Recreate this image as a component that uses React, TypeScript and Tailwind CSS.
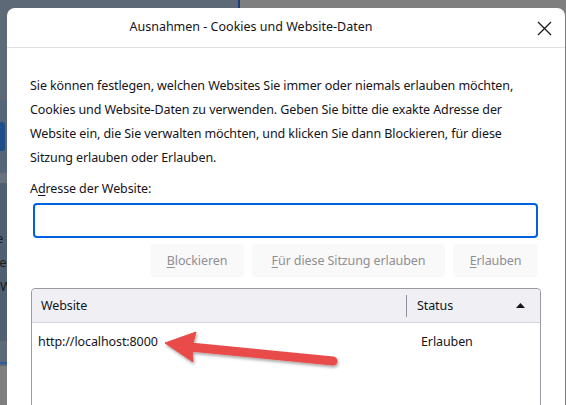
import React from "react";

const font = { fontFamily: '"Segoe UI", "Noto Sans", "Open Sans", sans-serif' };

function U({ children }: { children: React.ReactNode }) {
  return <span className="underline underline-offset-2 decoration-1">{children}</span>;
}

export default function App() {
  return (
    <div
      className="relative w-[566px] h-[405px] overflow-hidden bg-[#7f7f7f]"
      style={font}
    >
      {/* background desktop */}
      <div className="absolute left-0 top-0 w-[238px] h-[366px] bg-[#5d6977]" />
      <div className="absolute left-[238px] top-0 w-[2px] h-[10px] bg-[#1d3f73]" />
      <div className="absolute left-0 top-[100px] w-[8px] h-[73px] bg-[#55667b]" />
      <div className="absolute left-0 top-[122px] w-[5px] h-[29px] rounded-r-[3px] bg-[#1f4d8c]" />
      <div className="absolute left-0 top-[173px] w-[8px] h-[10px] bg-[#68737f]" />
      <div className="absolute left-0 top-[183px] w-[8px] h-[158px] bg-[#4f6073]" />
      <div className="absolute left-0 top-[362px] w-[8px] h-[2px] bg-[#2a5aa0]" />
      <div className="absolute left-0 top-[226px] w-[8px] overflow-hidden text-[13px] leading-[24px] text-[#1b1b1b]">
        <div className="ml-[-4px]">e</div>
        <div className="ml-[-4px]">le</div>
        <div>W</div>
      </div>

      {/* dialog */}
      <div className="absolute left-[7px] top-[8px] w-[558px] h-[420px] bg-white rounded-t-[8px] text-[#15141a]">
        <div className="relative h-[40px] flex items-center justify-center pr-[70px] border-b border-[#e0e0e6]">
          <span className="text-[12.5px]">Ausnahmen - Cookies und Website-Daten</span>
          <svg
            className="absolute left-[530px] top-[13px]"
            width="15"
            height="15"
            viewBox="0 0 15 15"
          >
            <path d="M1 1 L14 14 M14 1 L1 14" stroke="#1a1a1a" strokeWidth="1.3" fill="none" />
          </svg>
        </div>

        <div className="pl-[23px] pr-[24px] pt-[26px] text-[12.5px] tracking-[-0.1px] leading-[24px]">
          <p>
            Sie können festlegen, welchen Websites Sie immer oder niemals erlauben möchten,
            Cookies und Website-Daten zu verwenden. Geben Sie bitte die exakte Adresse der
            Website ein, die Sie verwalten möchten, und klicken Sie dann Blockieren, für diese
            Sitzung erlauben oder Erlauben.
          </p>
          <div className="mt-[7px]">
            A<U>d</U>resse der Website:
          </div>
          <div className="ml-[3px] mt-[2px] w-[505px] h-[35px] rounded-[4px] border-2 border-[#0061e0]" />
          <div className="mt-[6px] flex justify-end gap-[8px] pr-[3px] text-[#8f8f94]">
            <div className="w-[94px] h-[33px] rounded-[4px] bg-[#f9f9fa] flex items-center justify-center">
              <span>
                <U>B</U>lockieren
              </span>
            </div>
            <div className="w-[193px] h-[33px] rounded-[4px] bg-[#f9f9fa] flex items-center justify-center">
              <span>
                <U>F</U>ür diese Sitzung erlauben
              </span>
            </div>
            <div className="w-[85px] h-[33px] rounded-[4px] bg-[#f9f9fa] flex items-center justify-center">
              <span>
                <U>E</U>rlauben
              </span>
            </div>
          </div>
          <div className="mt-[11px] ml-[1px] w-[510px] h-[140px] border border-[#9a9aa2] rounded-t-[4px]">
            <div className="h-[34px] bg-[#f0f0f4] border-b border-[#d4d4da] rounded-t-[4px] flex items-center">
              <div className="w-[374px] pl-[9px]">Website</div>
              <div className="w-px h-[22px] bg-[#8f8f9d]" />
              <div className="flex-1 pl-[10px] flex items-center justify-between pr-[15px]">
                <span>Status</span>
                <svg width="9" height="5" viewBox="0 0 9 5">
                  <path d="M0 5 L4.5 0 L9 5 Z" fill="#15141a" />
                </svg>
              </div>
            </div>
            <div className="flex pt-[7px]">
              <div className="w-[389px] pl-[6px]">http://localhost:8000</div>
              <div>Erlauben</div>
            </div>
          </div>
        </div>
      </div>

      {/* red arrow annotation */}
      <svg className="absolute left-0 top-0" width="566" height="405" viewBox="0 0 566 405">
        <defs>
          <filter id="sh" x="-20%" y="-50%" width="140%" height="200%">
            <feDropShadow dx="1" dy="2" stdDeviation="1.8" floodColor="#000" floodOpacity="0.35" />
          </filter>
        </defs>
        <g filter="url(#sh)" fill="#e84b48" stroke="#e84b48">
          <line x1="190" y1="347" x2="333" y2="361" strokeWidth="9" strokeLinecap="round" />
          <path d="M165 343 L196 332 L192 347 L193 362 Z" strokeWidth="1" strokeLinejoin="round" />
        </g>
      </svg>
    </div>
  );
}
